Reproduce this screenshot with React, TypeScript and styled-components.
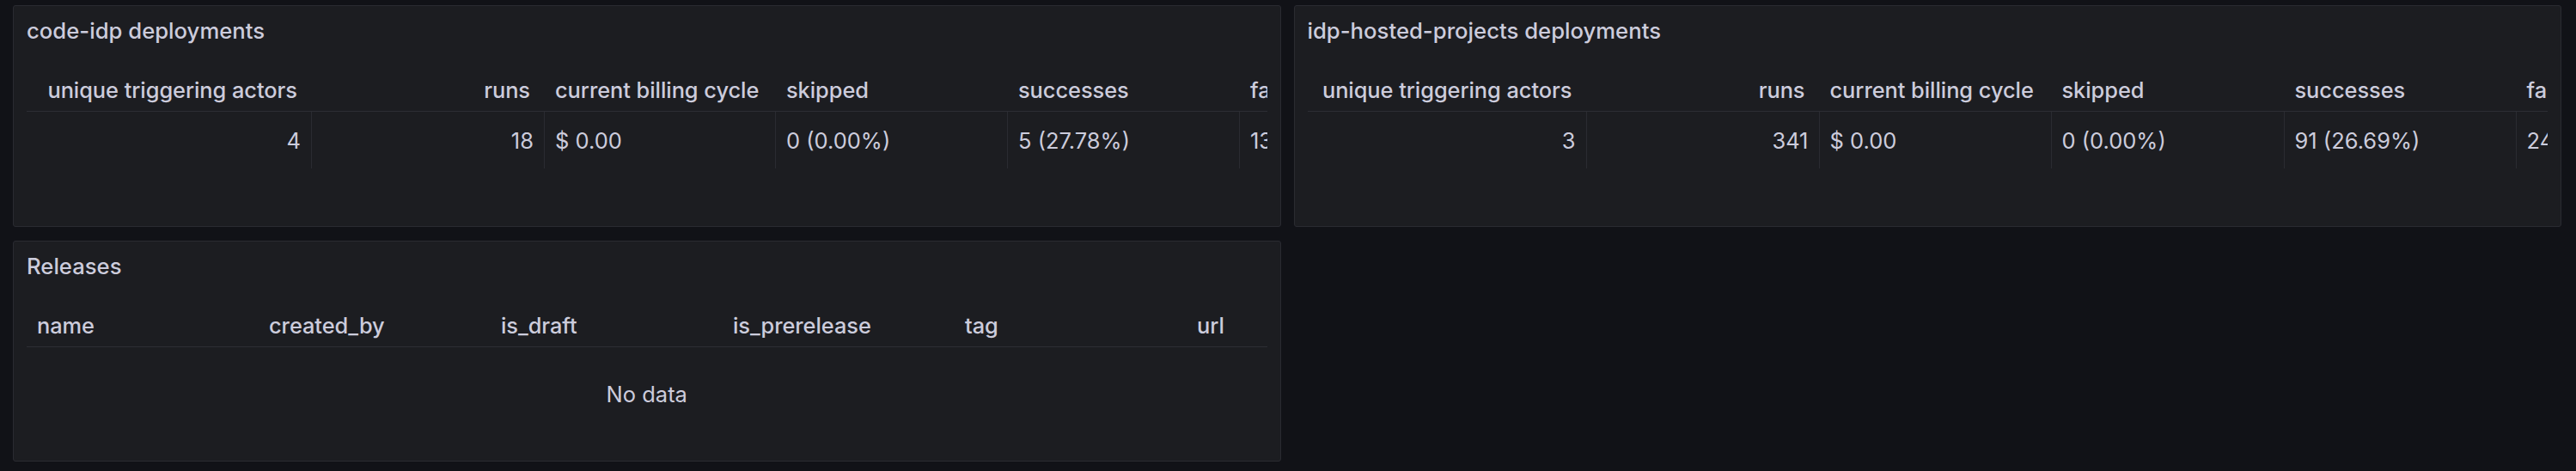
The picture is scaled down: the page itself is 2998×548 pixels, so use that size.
import * as React from 'react';
import styled, { createGlobalStyle } from 'styled-components';

const GlobalStyle = createGlobalStyle`
  html, body {
    margin: 0;
    padding: 0;
    background: #111217;
  }
  body {
    font-family: Inter, "Noto Sans", "Liberation Sans", sans-serif;
    color: #ccccdc;
  }
`

const Page = styled.div`
  display: grid;
  grid-template-columns: 1fr 1fr;
  grid-template-rows: 258px 257px;
  column-gap: 15px;
  row-gap: 16px;
  padding: 6px 17px 11px 15px;
  width: 2998px;
  height: 548px;
  box-sizing: border-box;
`

const Panel = styled.section`
  display: flex;
  flex-direction: column;
  background: #1c1d21;
  border: 1px solid #2a2b31;
  border-radius: 3px;
  overflow: hidden;
  min-width: 0;
`

const PanelHeader = styled.header`
  display: flex;
  align-items: center;
  height: 57px;
  flex: none;
  padding: 0 15px;
`

const Title = styled.h2`
  margin: 0;
  font-size: 25.7px;
  font-weight: 500;
  line-height: 1;
  color: #ccccdc;
  white-space: nowrap;
`

const PanelBody = styled.div`
  flex: 1;
  padding: 0 15px;
  min-width: 0;
`

const TableClip = styled.div`
  width: 100%;
  overflow: hidden;
`

const Row = styled.div<{ $cols: string }>`
  display: grid;
  grid-template-columns: ${(p) => p.$cols};
  height: 66px;
  width: max-content;
  min-width: 100%;
`

const HeaderRow = styled(Row)`
  box-sizing: border-box;
  padding-top: 15px;
  border-bottom: 1px solid #2d2e34;
`

const HeadCell = styled.div<{ $right?: boolean }>`
  display: flex;
  align-items: center;
  justify-content: ${(p) => (p.$right ? 'flex-end' : 'flex-start')};
  padding: ${(p) => (p.$right ? '0 17px 0 0' : '0 12px')};
  font-size: 25.4px;
  font-weight: 500;
  letter-spacing: -0.05px;
  white-space: nowrap;
  overflow: hidden;
`

const Cell = styled.div<{ $right?: boolean }>`
  display: flex;
  align-items: center;
  justify-content: ${(p) => (p.$right ? 'flex-end' : 'flex-start')};
  padding: 0 12px;
  font-size: 25.5px;
  font-weight: 400;
  white-space: nowrap;
  overflow: hidden;
  border-right: 1px solid #2a2b31;
`

const NoData = styled.div`
  display: flex;
  align-items: center;
  justify-content: center;
  height: 108px;
  font-size: 25.5px;
`

type Col = { name: string; right?: boolean }

const deployCols: Col[] = [
  { name: 'unique triggering actors', right: true },
  { name: 'runs', right: true },
  { name: 'current billing cycle' },
  { name: 'skipped' },
  { name: 'successes' },
  { name: 'failures' },
]

const deployments = [
  {
    title: 'code-idp deployments',
    widths: '332px 271px 269px 270px 270px 270px',
    values: ['4', '18', '$ 0.00', '0 (0.00%)', '5 (27.78%)', '13 (72.22%)'],
  },
  {
    title: 'idp-hosted-projects deployments',
    widths: '325px 271px 270px 271px 270px 270px',
    values: ['3', '341', '$ 0.00', '0 (0.00%)', '91 (26.69%)', '245 (71.85%)'],
  },
]

const releaseCols = ['name', 'created_by', 'is_draft', 'is_prerelease', 'tag', 'url']

function App() {
  return (
    <>
      <GlobalStyle />
      <Page>
        {deployments.map((d) => (
          <Panel key={d.title}>
            <PanelHeader>
              <Title>{d.title}</Title>
            </PanelHeader>
            <PanelBody>
              <TableClip>
                <HeaderRow $cols={d.widths}>
                  {deployCols.map((c) => (
                    <HeadCell key={c.name} $right={c.right}>
                      {c.name}
                    </HeadCell>
                  ))}
                </HeaderRow>
                <Row $cols={d.widths}>
                  {d.values.map((v, i) => (
                    <Cell key={i} $right={deployCols[i].right}>
                      {v}
                    </Cell>
                  ))}
                </Row>
              </TableClip>
            </PanelBody>
          </Panel>
        ))}
        <Panel>
          <PanelHeader>
            <Title>Releases</Title>
          </PanelHeader>
          <PanelBody>
            <TableClip>
              <HeaderRow $cols="repeat(6, 270px)">
                {releaseCols.map((c) => (
                  <HeadCell key={c}>{c}</HeadCell>
                ))}
              </HeaderRow>
            </TableClip>
            <NoData>No data</NoData>
          </PanelBody>
        </Panel>
      </Page>
    </>
  )
}

export default App
